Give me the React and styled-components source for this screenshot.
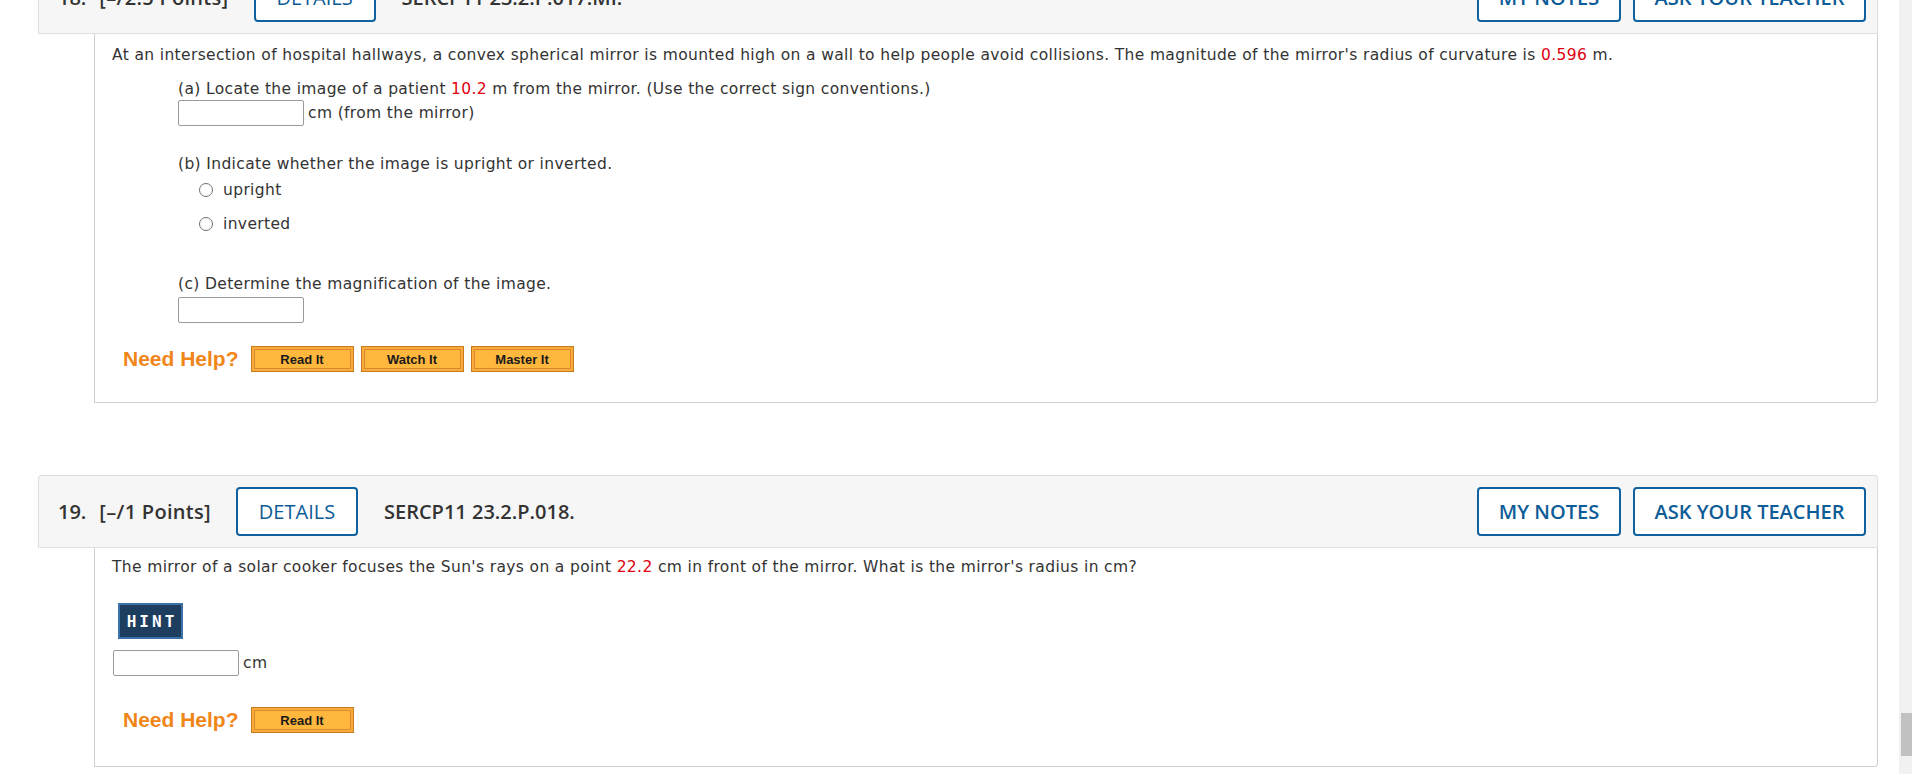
import React from "react";
import styled, { createGlobalStyle } from "styled-components";

const GlobalStyle = createGlobalStyle`
  html, body {
    margin: 0;
    padding: 0;
    background: #fff;
    overflow: hidden;
  }
`;

const Page = styled.div`
  display: flex;
  height: 774px;
  overflow: hidden;
`;

const Main = styled.main`
  flex: 1;
  padding: 0 21px 0 38px;
  display: flex;
  flex-direction: column;
  gap: 72px;
`;

const Scrollbar = styled.div`
  width: 13px;
  background: #f1f1f1;
  display: flex;
  flex-direction: column;
  justify-content: flex-end;
  align-items: flex-end;
  padding-bottom: 18px;
  box-sizing: border-box;
`;

const Thumb = styled.div`
  width: 11px;
  height: 43px;
  background: #c1c1c1;
`;

const Question = styled.section`
  display: flex;
  flex-direction: column;
  margin-top: ${(p) => p.$offset || 0}px;
`;

const Header = styled.header`
  height: 73px;
  box-sizing: border-box;
  background: #f6f6f6;
  border: 1px solid #dedede;
  border-radius: 3px 3px 0 0;
  display: flex;
  align-items: center;
  padding: 0 11px 0 19px;
  font-family: "Open Sans", "Liberation Sans", sans-serif;
  font-size: 20px;
  font-weight: 600;
  color: #333;
`;

const Num = styled.span`
  margin-right: 13px;
`;

const Points = styled.span`
  margin-right: 25px;
  letter-spacing: 0.3px;
`;

const Code = styled.span`
  margin-left: 26px;
  flex: 1;
`;

const OutlineButton = styled.button`
  height: 49px;
  width: ${(p) => p.$w}px;
  box-sizing: border-box;
  border: 2px solid #0f629f;
  border-radius: 4px;
  background: #fff;
  color: #0d5c97;
  font-family: "Open Sans", "Liberation Sans", sans-serif;
  font-size: 20px;
  font-weight: ${(p) => p.$weight || 600};
  padding: 0;
  margin-left: ${(p) => p.$ml || 0}px;
`;

const Body = styled.div`
  margin-left: 56px;
  border: 1px solid #cfcfcf;
  border-top: none;
  border-radius: 0 0 4px 0;
  padding: ${(p) => p.$pad};
  font-family: "DejaVu Sans", Verdana, sans-serif;
  font-size: 15.5px;
  letter-spacing: 0.36px;
  color: #333;
  display: flex;
  flex-direction: column;
  align-items: flex-start;
`;

const Line = styled.div`
  line-height: 20px;
  margin-top: ${(p) => p.$mt || 0}px;
  margin-left: ${(p) => p.$ml || 0}px;
  display: flex;
  align-items: center;
  white-space: nowrap;
`;

const Red = styled.span`
  color: #e0000f;
  white-space: pre;
`;

const Input = styled.input`
  width: 126px;
  height: 26px;
  box-sizing: border-box;
  border: 1px solid #9a9a9a;
  border-radius: 2px;
  margin: 0 4px 0 0;
  padding: 0;
  background: #fff;
`;

const Radio = styled.span`
  width: 14px;
  height: 14px;
  box-sizing: border-box;
  border: 1.5px solid #707070;
  border-radius: 50%;
  margin: 0 10px 0 -1px;
  background: #fff;
`;

const HelpRow = styled.div`
  display: flex;
  align-items: center;
  margin-top: ${(p) => p.$mt}px;
  margin-left: 11px;
  letter-spacing: 0;
`;

const NeedHelp = styled.span`
  font-family: "Liberation Sans", Arial, sans-serif;
  font-weight: bold;
  font-size: 21px;
  color: #f08518;
  margin-right: 12px;
`;

const HelpButton = styled.button`
  width: 103px;
  height: 26px;
  box-sizing: border-box;
  margin-right: 7px;
  padding: 0;
  border: 1px solid #c9791e;
  background: #ffb73d;
  box-shadow: inset 0 0 0 2px #fbab3a, inset 0 0 0 3px #d78a30;
  font-family: "Liberation Sans", Arial, sans-serif;
  font-weight: bold;
  font-size: 13px;
  color: #1a1a1a;
`;

const Hint = styled.button`
  margin: 26px 0 0 6px;
  width: 65px;
  height: 36px;
  box-sizing: border-box;
  background: #1d3e5f;
  border: 2px solid #3d72a9;
  color: #fff;
  font-family: "DejaVu Sans Mono", "Liberation Mono", monospace;
  font-weight: bold;
  font-size: 16px;
  letter-spacing: 3px;
  padding: 0 0 0 3px;
`;

const QHeader = ({ num, points, code }) => (
  <Header>
    <Num>{num}</Num>
    <Points>{points}</Points>
    <OutlineButton $w={122} $weight={500}>DETAILS</OutlineButton>
    <Code>{code}</Code>
    <OutlineButton $w={144}>MY NOTES</OutlineButton>
    <OutlineButton $w={233} $ml={12}>ASK YOUR TEACHER</OutlineButton>
  </Header>
);

export default function App() {
  return (
    <Page>
      <GlobalStyle />
      <Main>
        <Question $offset={-39}>
          <QHeader num="18." points="[–/2.5 Points]" code="SERCP11 23.2.P.017.MI." />
          <Body $pad="11px 0 30px 17px">
            <Line>
              At an intersection of hospital hallways, a convex spherical mirror is mounted high on a wall to help people avoid collisions. The magnitude of the mirror's radius of curvature is <Red> 0.596 </Red> m.
            </Line>
            <Line $mt={14} $ml={66}>
              (a) Locate the image of a patient <Red> 10.2 </Red> m from the mirror. (Use the correct sign conventions.)
            </Line>
            <Line $mt={1} $ml={66}>
              <Input /> cm (from the mirror)
            </Line>
            <Line $mt={28} $ml={66}>(b) Indicate whether the image is upright or inverted.</Line>
            <Line $mt={6} $ml={88}>
              <Radio /> upright
            </Line>
            <Line $mt={14} $ml={88}>
              <Radio /> inverted
            </Line>
            <Line $mt={40} $ml={66}>(c) Determine the magnification of the image.</Line>
            <Line $mt={3} $ml={66}>
              <Input />
            </Line>
            <HelpRow $mt={23}>
              <NeedHelp>Need Help?</NeedHelp>
              <HelpButton>Read It</HelpButton>
              <HelpButton>Watch It</HelpButton>
              <HelpButton>Master It</HelpButton>
            </HelpRow>
          </Body>
        </Question>

        <Question>
          <QHeader num="19." points="[–/1 Points]" code="SERCP11 23.2.P.018." />
          <Body $pad="9px 0 33px 17px">
            <Line>
              The mirror of a solar cooker focuses the Sun's rays on a point <Red> 22.2 </Red> cm in front of the mirror. What is the mirror's radius in cm?
            </Line>
            <Hint>HINT</Hint>
            <Line $mt={11} $ml={1}>
              <Input /> cm
            </Line>
            <HelpRow $mt={31}>
              <NeedHelp>Need Help?</NeedHelp>
              <HelpButton>Read It</HelpButton>
            </HelpRow>
          </Body>
        </Question>
      </Main>
      <Scrollbar>
        <Thumb />
      </Scrollbar>
    </Page>
  );
}
